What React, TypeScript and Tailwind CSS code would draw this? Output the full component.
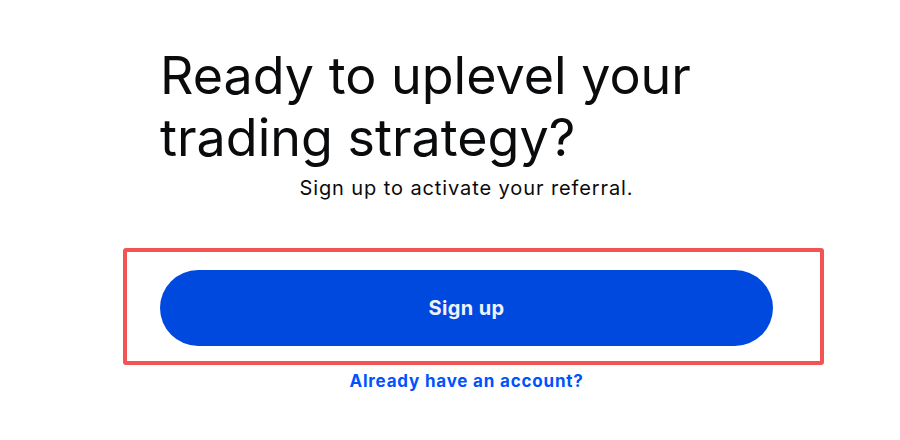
export default function App() {
  return (
    <div
      className="w-[900px] h-[440px] bg-white overflow-hidden"
      style={{ fontFamily: "Inter, 'Noto Sans', sans-serif" }}
    >
      <div className="ml-[160px] w-[613px] pt-[45px]">
        <h1 className="text-[52px] leading-[62px] font-normal tracking-[0px] text-[#0a0b0d]">
          Ready to uplevel your
          <br />
          trading strategy?
        </h1>
        <p className="mt-[6px] text-center text-[20px] leading-[26px] tracking-[0.9px] text-[#0a0b0d]">
          Sign up to activate your referral.
        </p>
      </div>

      <div className="mt-[47px] ml-[123px] w-[701px] h-[117px] border-4 border-[#f25454] rounded-[3px] pl-[33px] pt-[18px]">
        <button className="w-[613px] h-[76px] rounded-full bg-[#0049df] text-[20px] font-bold tracking-[0.4px] text-[#eef2ff]">
          Sign up
        </button>
      </div>

      <div className="ml-[160px] w-[613px] mt-[4px] text-center">
        <a className="text-[17px] leading-[24px] font-bold tracking-[0.8px] text-[#0052ff]">
          Already have an account?
        </a>
      </div>
    </div>
  );
}
